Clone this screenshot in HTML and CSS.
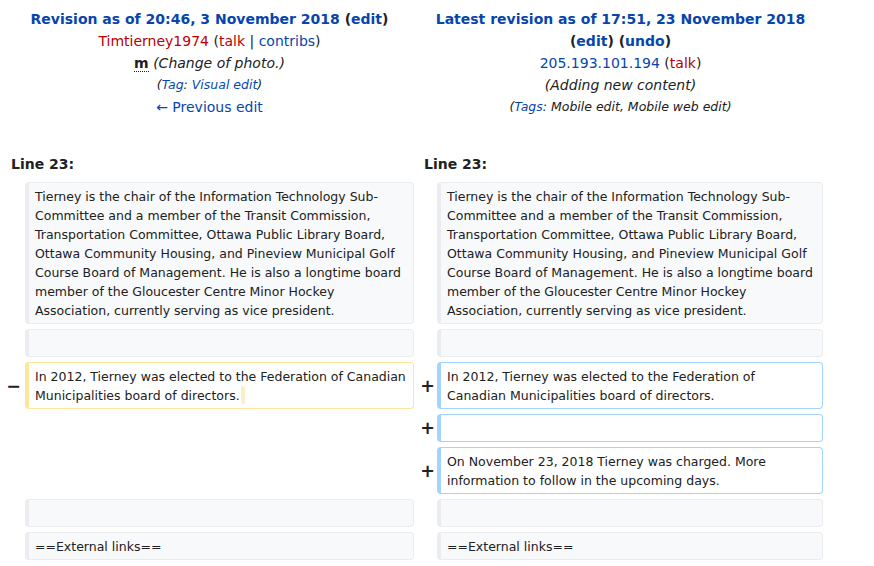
FILE: index.html
```html
<!DOCTYPE html>
<html>
<head>
<meta charset="utf-8">
<link rel="stylesheet" href="styles.css">
</head>
<body>
<div class="diff">
  <div class="hdr">
    <div class="title"><a class="lnk" href="#">Revision as of 20:46, 3 November 2018</a> <span class="paren">(<a class="lnk" href="#">edit</a>)</span></div>
    <div><a class="red" href="#">Timtierney1974</a> (<a class="red" href="#">talk</a> | <a class="lnk" href="#">contribs</a>)</div>
    <div><abbr class="minor">m</abbr> <span class="comment">(Change of photo.)</span></div>
    <div class="tags">(<a class="lnk" href="#">Tag</a>: <a class="lnk" href="#">Visual edit</a>)</div>
    <div><a class="lnk" href="#">← Previous edit</a></div>
  </div>
  <div class="hdr">
    <div class="title"><a class="lnk" href="#">Latest revision as of 17:51, 23 November 2018</a> <span class="paren">(<a class="lnk" href="#">edit</a>)</span> <span class="paren">(<a class="lnk" href="#">undo</a>)</span></div>
    <div><a class="lnk" href="#">205.193.101.194</a> (<a class="red" href="#">talk</a>)</div>
    <div><span class="comment">(Adding new content)</span></div>
    <div class="tags">(<a class="lnk" href="#">Tags</a>: Mobile edit, Mobile web edit)</div>
  </div>

  <div class="lineno">Line 23:</div>
  <div class="lineno">Line 23:</div>

  <div class="marker"></div>
  <div class="cell context">Tierney is the chair of the Information Technology Sub-Committee and a member of the Transit Commission, Transportation Committee, Ottawa Public Library Board, Ottawa Community Housing, and Pineview Municipal Golf Course Board of Management. He is also a longtime board member of the Gloucester Centre Minor Hockey Association, currently serving as vice president.</div>
  <div class="marker"></div>
  <div class="cell context">Tierney is the chair of the Information Technology Sub-Committee and a member of the Transit Commission, Transportation Committee, Ottawa Public Library Board, Ottawa Community Housing, and Pineview Municipal Golf Course Board of Management. He is also a longtime board member of the Gloucester Centre Minor Hockey Association, currently serving as vice president.</div>

  <div class="marker"></div>
  <div class="cell context"><br></div>
  <div class="marker"></div>
  <div class="cell context"><br></div>

  <div class="marker"><span>−</span></div>
  <div class="cell deleted">In 2012, Tierney was elected to the Federation of Canadian Municipalities board of directors.<span class="diffchange"></span></div>
  <div class="marker plus"><span>+</span></div>
  <div class="cell added">In 2012, Tierney was elected to the Federation of Canadian Municipalities board of directors.</div>

  <div class="blank"></div>
  <div class="marker plus"><span>+</span></div>
  <div class="cell added"><br></div>

  <div class="blank"></div>
  <div class="marker plus"><span>+</span></div>
  <div class="cell added">On November 23, 2018 Tierney was charged. More information to follow in the upcoming days.</div>

  <div class="marker"></div>
  <div class="cell context"><br></div>
  <div class="marker"></div>
  <div class="cell context"><br></div>

  <div class="marker"></div>
  <div class="cell context">==External links==</div>
  <div class="marker"></div>
  <div class="cell context">==External links==</div>
</div>
</body>
</html>
```

FILE: styles.css
```css
html, body {
  margin: 0;
  padding: 0;
  background: #ffffff;
}
body {
  padding-top: 8px;
  font-family: "DejaVu Sans", sans-serif;
  color: #202122;
  font-size: 14px;
}
.diff {
  display: grid;
  grid-template-columns: 16px 389px 15px 386px;
  column-gap: 4px;
  row-gap: 5px;
  margin-left: 5px;
}
.hdr {
  grid-column: span 2;
  text-align: center;
  line-height: 22px;
  font-size: 14px;
  margin-bottom: 30px;
}
.title {
  font-weight: bold;
}
a {
  text-decoration: none;
}
.lnk {
  color: #0645ad;
}
.red {
  color: #ba0000;
}
.minor {
  font-weight: bold;
  text-decoration: none;
  border-bottom: 1px dotted #202122;
}
.comment {
  font-style: italic;
}
.tags {
  font-style: italic;
  font-size: 12.5px;
}
.lineno {
  grid-column: span 2;
  font-weight: bold;
  font-size: 14px;
  line-height: 22px;
  padding-left: 6px;
  padding-bottom: 2px;
}
.marker {
  display: flex;
  align-items: center;
  justify-content: flex-end;
  font-weight: bold;
  font-size: 17.5px;
}
.marker.plus span {
  margin-right: -2px;
}
.blank {
  grid-column: span 2;
}
.cell {
  font-size: 12.5px;
  line-height: 19px;
  padding: 4px 6px 3px 6px;
  border: 1px solid #eaecf0;
  border-left-width: 4px;
  border-radius: 4px;
}
.context {
  background: #f8f9fa;
}
.deleted {
  background: #ffffff;
  border-color: #ffe49c;
}
.added {
  background: #ffffff;
  border-color: #a3d3ff;
}
.diffchange {
  display: inline-block;
  width: 4px;
  height: 18px;
  vertical-align: -4px;
  margin-left: 1px;
  background: #feeec8;
  border-radius: 2px;
}
```
